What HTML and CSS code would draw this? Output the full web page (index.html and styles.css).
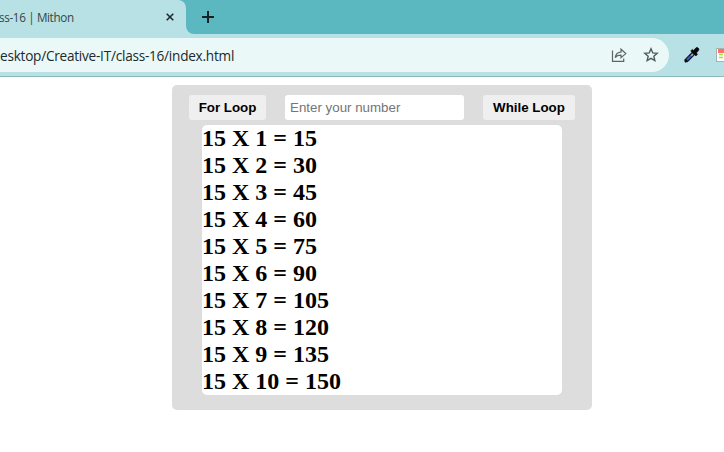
FILE: index.html
```html
<!DOCTYPE html>
<html lang="en">
<head>
<meta charset="utf-8">
<title>class-16 | Mithon</title>
<link rel="stylesheet" href="styles.css">
</head>
<body>
<header class="browser">
  <div class="tabs">
    <div class="tab">
      <span class="tab-title">ss-16 | Mithon</span>
      <svg class="close" width="8" height="8" viewBox="0 0 8 8"><path d="M.7.7l6.6 6.6M7.3.7L.7 7.3"/></svg>
    </div>
    <div class="strip">
      <svg class="plus" width="12" height="12" viewBox="0 0 12 12"><path d="M6 0v12M0 6h12"/></svg>
    </div>
  </div>
  <div class="toolbar">
    <div class="address">
      <span class="url">esktop/Creative-IT/class-16/index.html</span>
      <svg class="share" width="16" height="16" viewBox="0 0 16 16"><path d="M1.5 3.5v10.8h11.2v-2.8M4.2 10.7C4.7 7.3 6.5 5.2 10 5.1V2.2l4.8 4.4-4.8 4.2V8.1C7.2 8 5.4 8.8 4.2 10.7z"/></svg>
      <svg class="star" width="16" height="16" viewBox="0 0 16 16"><path d="M8 1.8l1.75 4.1 4.45.4-3.38 2.95 1.02 4.35L8 11.3l-3.84 2.3 1.02-4.35L1.8 6.3l4.45-.4z"/></svg>
    </div>
    <svg class="dropper" width="16" height="16" viewBox="0 0 16 16"><path d="M1 15.2l-.3-2.5L8 5.2 6.7 3.9l1.6-1.5 1.2 1L12 .8c1.5-1.1 3.6.8 2.7 2.5L12.4 6l1.1 1.3L12 8.9l-1.3-1.2-6.9 7z"/><path class="glass" d="M8.3 6.3l1.4 1.3-1.8 1.9-1.8-1z"/><path class="ink" d="M5.2 9h3l-4.5 4.7-1.5-1.5z"/></svg>
    <svg class="extension" width="8" height="16" viewBox="0 0 8 16"><rect class="sheet" x=".5" y="1.5" width="14" height="13"/><path class="red" d="M2 2h6v4H2z"/><path class="green" d="M3 7.5h4M3 10.5h4"/></svg>
  </div>
</header>
<main class="container">
  <div class="controls">
    <button class="for">For Loop</button>
    <input type="text" placeholder="Enter your number">
    <button class="while">While Loop</button>
  </div>
  <div class="result">
    <div>15 X 1 = 15</div>
    <div>15 X 2 = 30</div>
    <div>15 X 3 = 45</div>
    <div>15 X 4 = 60</div>
    <div>15 X 5 = 75</div>
    <div>15 X 6 = 90</div>
    <div>15 X 7 = 105</div>
    <div>15 X 8 = 120</div>
    <div>15 X 9 = 135</div>
    <div>15 X 10 = 150</div>
  </div>
</main>
</body>
</html>
```
FILE: styles.css
```css
* { box-sizing: border-box; }
body { margin: 0; background: #fff; overflow: hidden; }
svg { display: block; flex: none; fill: none; }
.browser { height: 77px; background: #b7e1e4; border-bottom: 1px solid #8eb9bc; font-family: "Open Sans", "Noto Sans", sans-serif; white-space: nowrap; }
.tabs { display: flex; height: 34px; background: linear-gradient(#5bb8c1 17px, #b7e1e4 17px); }
.tab { display: flex; align-items: center; justify-content: space-between; width: 186px; padding-right: 12px; background: #b7e1e4; border-top-right-radius: 8px; }
.tab-title { margin-left: -1px; font-size: 11.7px; color: #354648; letter-spacing: -.36px; }
.close { stroke: #202b2c; stroke-width: 1.6; }
.strip { flex: 1; padding: 11px 0 0 16px; background: #5bb8c1; border-bottom-left-radius: 8px; }
.plus { stroke: #152123; stroke-width: 2; }
.toolbar { display: flex; align-items: center; height: 42px; }
.address { display: flex; flex: none; align-items: center; width: 669px; height: 34px; padding-right: 10px; background: #ebf8f8; border-radius: 0 17px 17px 0; }
.url { flex: 1; font-size: 13.6px; color: #20292b; letter-spacing: -.24px; }
.share { margin-right: 16px; stroke: #5c6667; stroke-width: 1.2; }
.star { stroke: #505b5c; stroke-width: 1.4; }
.dropper { margin-left: 15px; fill: #05070b; stroke: #05070b; stroke-width: .6; }
.ink { fill: #3454d1; stroke: none; }
.glass { fill: #8fa9b5; stroke: none; }
.extension { margin-left: 16px; }
.sheet { fill: #fff; stroke: #a9b0b0; }
.red { fill: #ff7065; }
.green { stroke: #9ce53c; stroke-width: 1.4; }

.container { width: 420px; height: 325px; margin: 8px 0 0 172px; padding: 10px 17px 0; background: #ddd; border-radius: 5px; }
.controls { display: flex; justify-content: space-between; height: 25px; margin-bottom: 5px; }
.controls button, .controls input { height: 25px; padding: 0; border: 0; border-radius: 3px; font: 13.333px "Liberation Sans", Arial, sans-serif; }
.controls button { background: #efefef; color: #000; font-weight: 700; }
.for { width: 77px; }
.while { width: 92px; }
.controls input { width: 179px; padding: 0 5px; background: #fff; }
.controls input::placeholder { color: #757575; }
.result { width: 360px; margin-left: 13px; background: #fff; border-radius: 5px; font: 700 24px/27px "Liberation Serif", "Times New Roman", serif; color: #000; }
```
